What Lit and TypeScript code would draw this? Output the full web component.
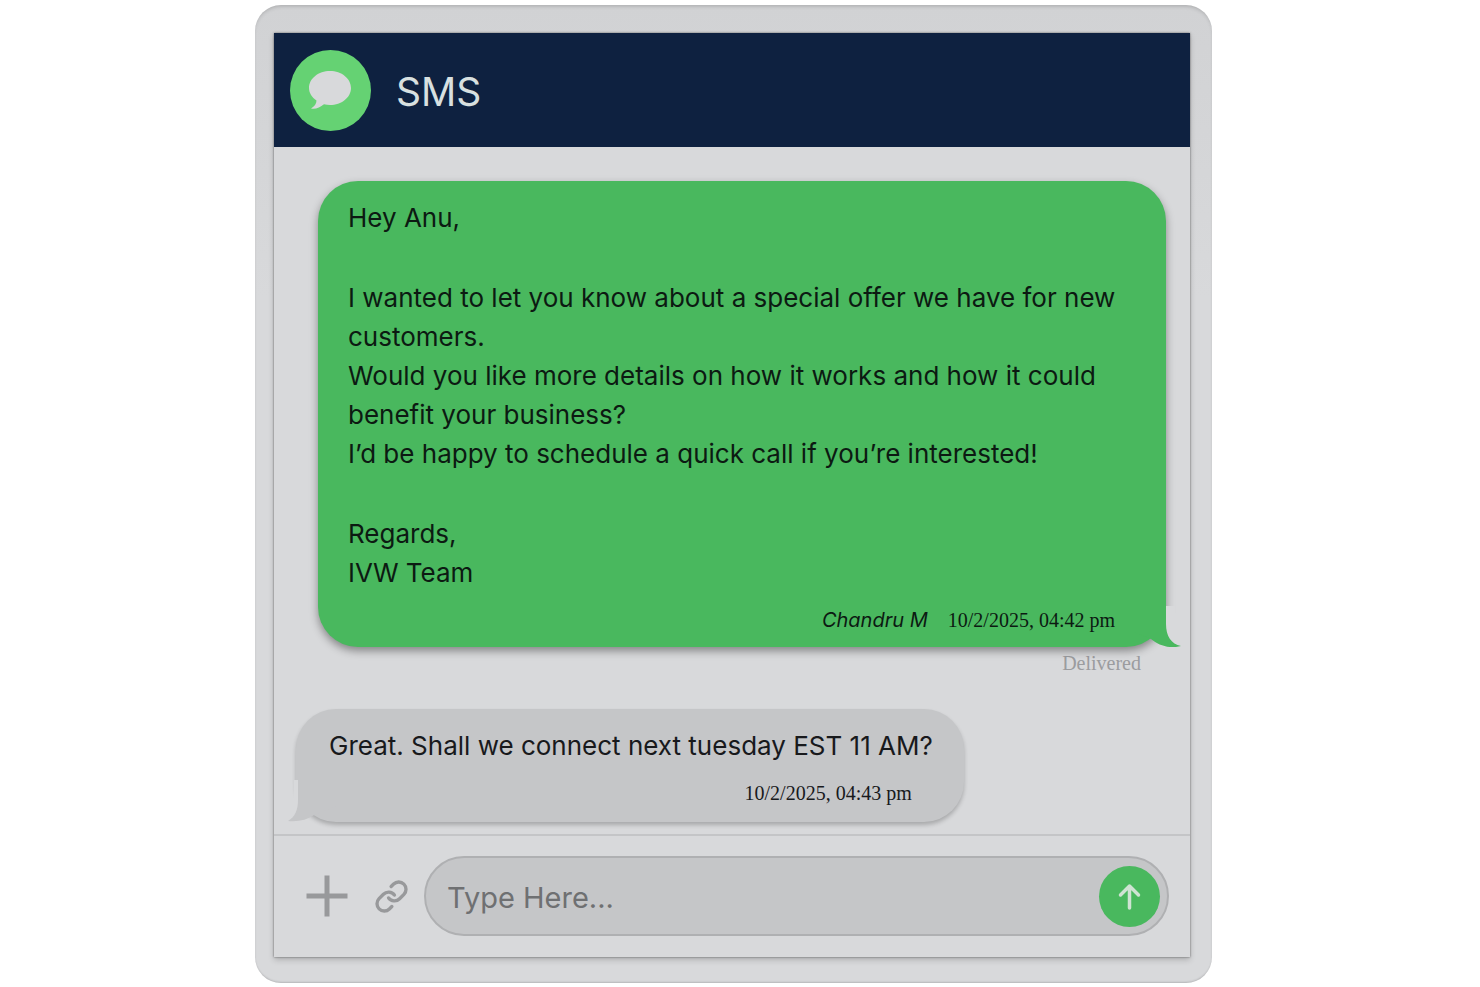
import { LitElement, html, css, svg } from "lit";
import { customElement, property } from "lit/decorators.js";

@customElement("chat-bubble")
class ChatBubble extends LitElement {
  @property() side = "sent";
  @property() author = "";
  @property() time = "";
  @property({ attribute: false }) groups: string[][] = [];

  static styles = css`
    :host {
      display: block;
    }
    .bubble {
      position: relative;
      box-sizing: border-box;
      border-radius: 40px;
      color: #0c1a12;
    }
    .sent {
      padding: 17px 30px 15px;
      background: #49b85e;
      box-shadow: 0 4px 8px rgba(0, 0, 0, 0.38);
    }
    .received {
      padding: 17px 31px 17px 33px;
      background: #c5c6c8;
      box-shadow: 0 3px 4px rgba(0, 0, 0, 0.22);
      color: #18191c;
    }
    .groups {
      display: flex;
      flex-direction: column;
      gap: 41px;
    }
    .line {
      margin: 0;
      font-size: 26px;
      line-height: 39px;
    }
    .meta {
      display: flex;
      justify-content: flex-end;
      align-items: baseline;
      gap: 20px;
      margin-top: 16px;
      padding-right: 21px;
      line-height: 24px;
    }
    .author {
      font-size: 20px;
      font-style: italic;
    }
    .time {
      font-family: "Liberation Serif", serif;
      font-size: 20px;
    }
    .tail {
      position: absolute;
      bottom: 0;
      display: block;
    }
    .sent .tail {
      right: -16px;
    }
    .received .tail {
      left: -8px;
    }
  `;

  tail() {
    return this.side === "sent"
      ? svg`<svg class="tail" width="48" height="41" viewBox="0 0 48 41" aria-hidden="true">
          <rect x="32" width="9" height="38" fill="#d8d9db" />
          <path d="M0 0H32V18C32 30 37 38 47 40C37 43 25 40 17 33L0 26Z" fill="#49b85e" />
        </svg>`
      : svg`<svg class="tail" width="48" height="42" viewBox="0 0 48 42" aria-hidden="true">
          <rect x="6" width="4" height="32" fill="#d8d9db" />
          <path d="M48 0H10V20C10 30 7 37 0 41C10 42 19 40 26 35L48 26Z" fill="#c5c6c8" />
        </svg>`;
  }

  render() {
    return html`
      <article class="bubble ${this.side}">
        ${this.tail()}
        <div class="groups">
          ${this.groups.map(
            (lines) => html`<div>${lines.map((l) => html`<p class="line">${l}</p>`)}</div>`
          )}
        </div>
        <div class="meta">
          ${this.author ? html`<span class="author">${this.author}</span>` : ""}
          <time class="time">${this.time}</time>
        </div>
      </article>
    `;
  }
}

@customElement("app-root")
class AppRoot extends LitElement {
  static styles = css`
    :host {
      display: flex;
      justify-content: center;
      padding: 5px 13px 4px 0;
      background: #fff;
      font-family: Inter, "Liberation Sans", sans-serif;
    }
    .frame {
      box-sizing: border-box;
      width: 100%;
      max-width: 957px;
      padding: 28px 22px 26px 19px;
      border-radius: 26px;
      background: linear-gradient(#d1d2d4, #d8d9db 30%);
      box-shadow: inset 0 3px 4px -2px rgba(0, 0, 0, 0.2), inset 0 -2px 2px -1px rgba(0, 0, 0, 0.16);
    }
    .panel {
      background: #d8d9db;
      box-shadow: 0 0 2px rgba(0, 0, 0, 0.5), 0 3px 6px rgba(0, 0, 0, 0.18);
    }
    .header {
      display: flex;
      align-items: center;
      gap: 25px;
      box-sizing: border-box;
      min-height: 114px;
      padding: 0 16px;
      background: #0e2140;
    }
    .logo {
      display: block;
      flex: none;
    }
    .title {
      margin: 0;
      padding-top: 4px;
      color: #d8e0e0;
      font-size: 39px;
      font-weight: 400;
      line-height: 48px;
    }
    .thread {
      padding: 34px 24px 12px 22px;
    }
    .outgoing {
      padding-left: 22px;
    }
    .incoming {
      width: fit-content;
      margin-top: 34px;
    }
    .status {
      margin: 4px 25px 0;
      color: #9b9c9f;
      font-family: "Liberation Serif", serif;
      font-size: 20px;
      line-height: 24px;
      text-align: right;
    }
    .composer {
      display: flex;
      align-items: center;
      padding: 20px 21px 21px 32px;
      border-top: 2px solid #c4c5c7;
    }
    .tool {
      flex: none;
      padding: 0;
      border: 0;
      background: none;
      color: #98999b;
    }
    .tool svg,
    .send svg {
      display: block;
    }
    .link {
      margin: 0 15px 0 26px;
    }
    .field {
      display: flex;
      flex: 1;
      align-items: center;
      box-sizing: border-box;
      min-width: 0;
      height: 80px;
      padding: 0 7px 0 21px;
      border: 2px solid #afb0b2;
      border-radius: 40px;
      background: #c5c6c8;
    }
    .input {
      flex: 1;
      min-width: 0;
      height: 60px;
      padding: 2px 0 0;
      border: 0;
      outline: 0;
      background: none;
      color: #18191c;
      font: 400 29px/36px Inter, "Liberation Sans", sans-serif;
    }
    .input::placeholder {
      color: #6f7072;
      opacity: 1;
    }
    .send {
      flex: none;
      width: 61px;
      height: 61px;
      padding: 0;
      border: 0;
      border-radius: 50%;
      background: #49b85e;
      color: #cfe3d3;
    }
  `;

  sent = [
    ["Hey Anu,"],
    [
      "I wanted to let you know about a special offer we have for new customers.",
      "Would you like more details on how it works and how it could benefit your business?",
      "I’d be happy to schedule a quick call if you’re interested!",
    ],
    ["Regards,", "IVW Team"],
  ];

  received = [["Great. Shall we connect next tuesday EST 11 AM?"]];

  render() {
    return html`
      <div class="frame">
        <main class="panel">
          <header class="header">
            <svg class="logo" width="81" height="81" viewBox="0 0 81 81" aria-hidden="true">
              <circle cx="40.5" cy="40.5" r="40.5" fill="#65d273" />
              <path
                d="M40 21C28.5 21 19 28.500 19 38C19 43 22 47.500 26.500 50.500C26.500 53.500 24.500 56.500 21 58.500C25.500 59.500 30 57.500 34 54.200C36 54.700 38 55 40 55C51.500 55 61 47.500 61 38C61 28.500 51.500 21 40 21Z"
                fill="#d8d9db"
              />
            </svg>
            <h1 class="title">SMS</h1>
          </header>
          <section class="thread">
            <div class="outgoing">
              <chat-bubble
                side="sent"
                author="Chandru M"
                time="10/2/2025, 04:42 pm"
                .groups=${this.sent}
              ></chat-bubble>
              <p class="status">Delivered</p>
            </div>
            <div class="incoming">
              <chat-bubble
                side="received"
                time="10/2/2025, 04:43 pm"
                .groups=${this.received}
              ></chat-bubble>
            </div>
          </section>
          <form class="composer" @submit=${(e: Event) => e.preventDefault()}>
            <button class="tool" type="button" aria-label="Add">
              <svg width="42" height="42" viewBox="0 0 42 42" stroke="currentColor" stroke-width="5">
                <path d="M0.500 21H41.500M21 0.500V41.500" />
              </svg>
            </button>
            <button class="tool link" type="button" aria-label="Attach link">
              <svg width="35" height="35" viewBox="0 0 24 24" fill="none" stroke="currentColor" stroke-width="2.300" stroke-linecap="round" stroke-linejoin="round">
                <path d="M10 13a5 5 0 0 0 7.540.540l3-3a5 5 0 0 0-7.070-7.070l-1.720 1.710" />
                <path d="M14 11a5 5 0 0 0-7.540-.540l-3 3a5 5 0 0 0 7.070 7.070l1.710-1.710" />
              </svg>
            </button>
            <div class="field">
              <input class="input" type="text" placeholder="Type Here..." aria-label="Message" />
              <button class="send" type="submit" aria-label="Send">
                <svg width="61" height="61" viewBox="0 0 61 61" fill="none" stroke="currentColor" stroke-width="3.500" stroke-linecap="round" stroke-linejoin="round">
                  <path d="M30.500 42V20M21.500 29L30.500 20L39.500 29" />
                </svg>
              </button>
            </div>
          </form>
        </main>
      </div>
    `;
  }
}
